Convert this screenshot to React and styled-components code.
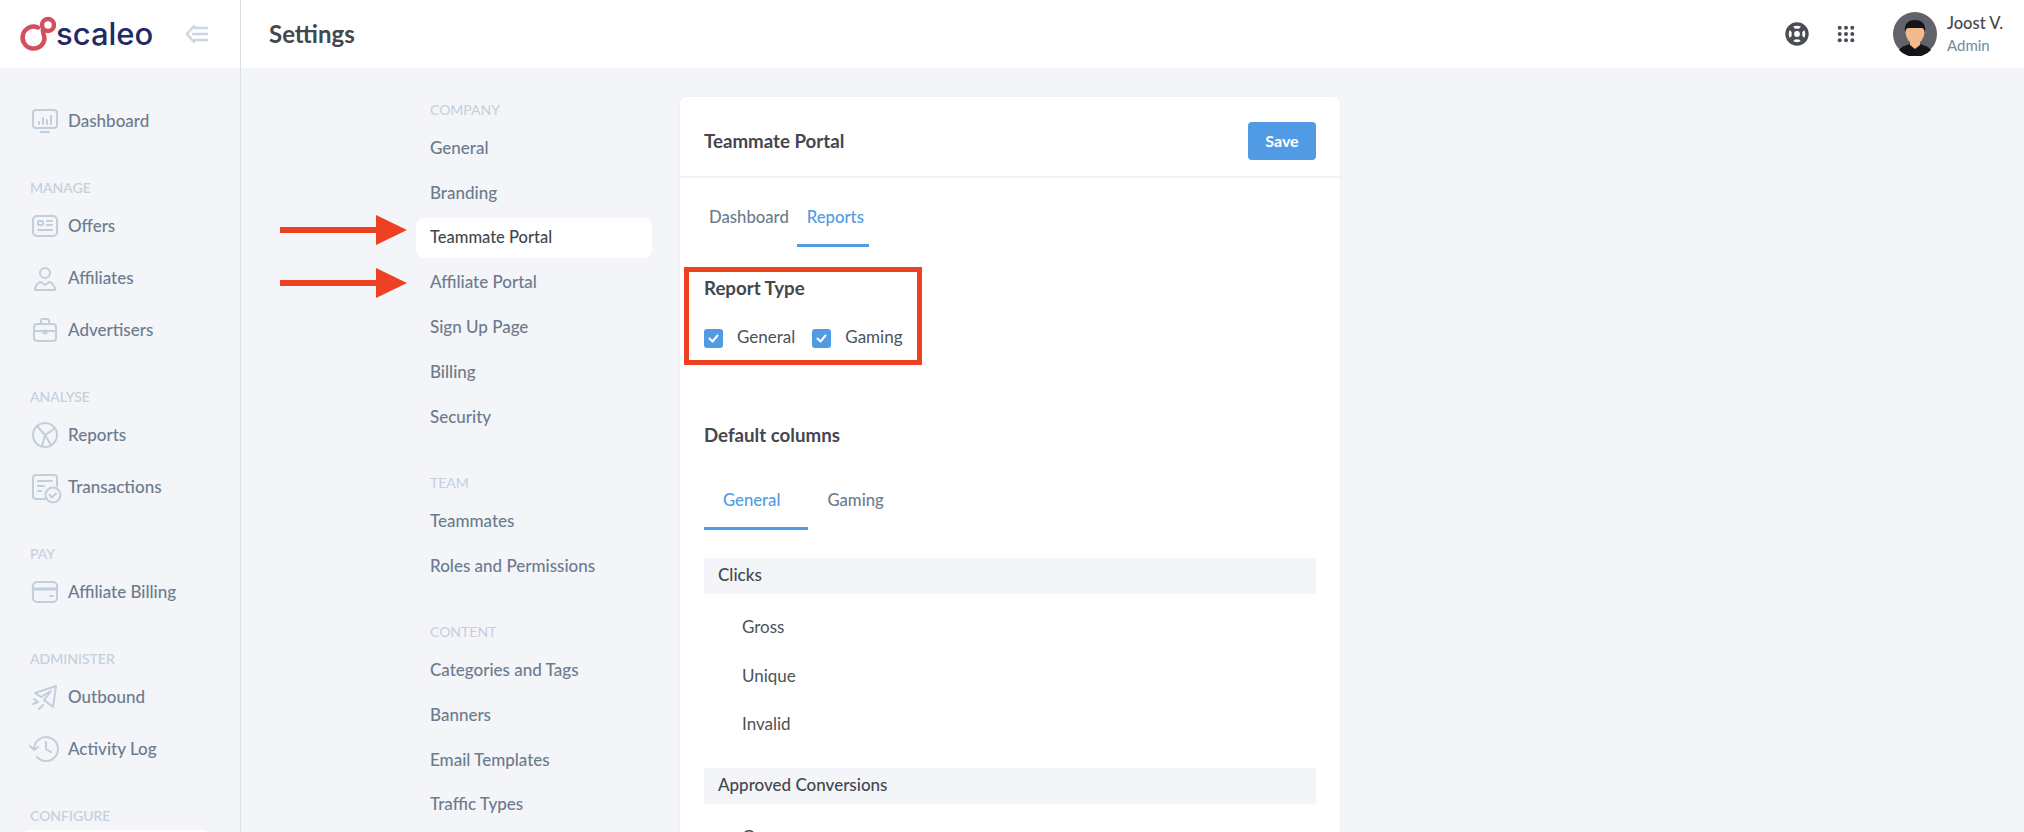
import styled, { createGlobalStyle } from "styled-components";

const GlobalStyle = createGlobalStyle`
    html, body {
        margin: 0;
        padding: 0;
        height: 100%;
        background: #f3f5f9;
        font-family: "Lato", "Open Sans", sans-serif;
        overflow: hidden;
    }
    * { box-sizing: border-box; }
`;

const Page = styled.div`
    position: relative;
    display: flex;
    width: 2024px;
    height: 832px;
    overflow: hidden;
    background: #f3f5f9;
`;

const Sidebar = styled.aside`
    flex: 0 0 241px;
    border-right: 1px solid #d8dfe9;
`;

const Brand = styled.div`
    display: flex;
    align-items: center;
    height: 68px;
    padding-left: 18px;
    background: #fff;
`;

const BrandName = styled.span`
    margin-left: 0;
    font-family: "Inter", sans-serif;
    font-size: 31px;
    font-weight: 500;
    color: #1f2a68;
    line-height: 68px;
`;

const Collapse = styled.svg`
    width: 24px;
    height: 20px;
    margin-left: 32px;
`;

const SideNav = styled.nav`
    padding-top: 27px;
`;

const SideLabel = styled.div`
    height: 20px;
    margin: 31px 0 2px 30px;
    font-size: 14px;
    font-weight: 500;
    line-height: 20px;
    color: #c5cfdb;
`;

const SideItem = styled.div`
    display: flex;
    align-items: center;
    gap: 10px;
    height: ${(props) => (props.$active ? "44px" : "52px")};
    margin: ${(props) => (props.$active ? "4px 31px 0 23px" : "0")};
    padding-left: ${(props) => (props.$active ? "9px" : "32px")};
    border-radius: 6px;
    background: ${(props) => (props.$active ? "#fff" : "transparent")};
    font-size: 17px;
    font-weight: 500;
    color: #6c7b8d;
`;

const SideText = styled.span`
    padding-bottom: 1px;
`;

const IconSlot = styled.svg`
    flex: 0 0 26px;
    width: 26px;
    height: 26px;
    fill: none;
    stroke: #c3cedb;
    stroke-width: 2;
    stroke-linecap: round;
    stroke-linejoin: round;
    overflow: visible;
`;

const Main = styled.div`
    flex: 1;
    min-width: 0;
`;

const TopBar = styled.header`
    display: flex;
    align-items: center;
    height: 68px;
    padding-left: 28px;
    background: #fff;
`;

const PageTitle = styled.h1`
    flex: 1;
    margin: 0;
    padding-bottom: 2px;
    font-size: 24px;
    font-weight: 700;
    color: #44474e;
`;

const TopIcon = styled.svg`
    width: 26px;
    height: 26px;
    margin-right: ${(props) => props.$gap}px;
`;

const User = styled.div`
    display: flex;
    align-items: center;
    width: 131px;
`;

const Avatar = styled.svg`
    flex: 0 0 44px;
    width: 44px;
    height: 44px;
    margin-right: 10px;
`;

const UserName = styled.div`
    font-size: 16.5px;
    font-weight: 500;
    line-height: 22px;
    color: #44474e;
`;

const UserRole = styled.div`
    font-size: 15px;
    line-height: 22px;
    color: #75879b;
`;

const Content = styled.div`
    display: flex;
    gap: 28px;
    padding: 29px 0 0 175px;
`;

const SettingsNav = styled.nav`
    flex: 0 0 236px;
    padding-top: 3px;
`;

const NavSection = styled.div`
    & + & {
        margin-top: 36.2px;
    }
`;

const NavLabel = styled.div`
    height: 20px;
    margin: 0 0 8px 14px;
    font-size: 14px;
    line-height: 20px;
    color: #c5cfdb;
`;

const NavItem = styled.div`
    display: flex;
    align-items: center;
    height: 40px;
    margin-bottom: 4.8px;
    padding: 0 0 1px 14px;
    border-radius: 8px;
    background: ${(props) => (props.$active ? "#fff" : "transparent")};
    font-size: ${(props) => (props.$active ? "16.5px" : "17px")};
    font-weight: 500;
    color: ${(props) => (props.$active ? "#44474e" : "#6c7b8d")};
`;

const Card = styled.section`
    flex: 0 0 660px;
    height: 760px;
    border-radius: 6px 6px 0 0;
    background: #fff;
    box-shadow: 0 0 2px rgba(120, 135, 160, 0.12);
`;

const CardHeader = styled.div`
    display: flex;
    align-items: center;
    justify-content: space-between;
    height: 81px;
    padding: 8px 24px 0;
    border-bottom: 2px solid #f0f2f6;
`;

const CardTitle = styled.h2`
    margin: 0;
    font-size: 18.7px;
    font-weight: 700;
    color: #44474e;
`;

const SaveButton = styled.button`
    width: 68px;
    height: 38px;
    border: 0;
    border-radius: 4px;
    background: #519be4;
    font-family: inherit;
    font-size: 16px;
    font-weight: 700;
    color: #fff;
`;

const CardBody = styled.div`
    padding: 0 24px;
`;

const TabBar = styled.div`
    display: flex;
    margin-top: ${(props) => props.$top}px;
`;

const Tab = styled.div`
    padding: 29px ${(props) => props.$right}px 17px ${(props) => props.$left}px;
    border-bottom: 3px solid ${(props) => (props.$active ? "#519be4" : "transparent")};
    font-size: 16.7px;
    line-height: 20px;
    font-weight: 500;
    color: ${(props) => (props.$active ? "#519be4" : "#6c7b8d")};
`;

const ReportSection = styled.div`
    position: relative;
    margin-top: 30px;
`;

const Highlight = styled.div`
    position: absolute;
    top: -10px;
    left: -20px;
    width: 238px;
    height: 98px;
    border: 5px solid #ee4124;
`;

const SectionTitle = styled.h3`
    margin: 0;
    padding-bottom: 2px;
    font-size: 18.7px;
    line-height: 22px;
    font-weight: 700;
    color: #44474e;
`;

const CheckRow = styled.div`
    display: flex;
    align-items: center;
    gap: 14px;
    margin-top: 27px;
    height: 20px;
`;

const CheckBox = styled.span`
    display: flex;
    align-items: center;
    justify-content: center;
    width: 19px;
    height: 19px;
    border-radius: 3px;
    background: #519be4;
    margin-left: ${(props) => props.$offset || 0}px;
`;

const CheckLabel = styled.span`
    padding-bottom: 3px;
    font-size: 17px;
    color: #4d5158;
`;

const ColumnsTitle = styled(SectionTitle)`
    margin-top: 76px;
`;

const GroupHead = styled.div`
    display: flex;
    align-items: center;
    height: 36px;
    margin-top: ${(props) => props.$top}px;
    padding: 0 0 3px 14px;
    background: #f3f5f9;
    font-size: 17px;
    font-weight: 500;
    color: #44474e;
`;

const ColumnList = styled.div`
    padding-top: 10px;
`;

const ColumnRow = styled.div`
    display: flex;
    align-items: center;
    height: 48.5px;
    padding: 0 0 3px 38px;
    font-size: 17px;
    color: #4d5158;
`;

const Arrow = styled.svg`
    position: absolute;
    left: 280px;
    top: ${(props) => props.$top}px;
    width: 128px;
    height: 30px;
`;

const DashboardIcon = () => (
    <IconSlot viewBox="0 0 26 26">
        <rect x="1" y="2" width="24" height="18" rx="3" />
        <path d="M9 24h8M7 14v2M11 10v6M15 12v4M19 8v8" />
    </IconSlot>
);
const OffersIcon = () => (
    <IconSlot viewBox="0 0 26 26">
        <rect x="1" y="3" width="24" height="20" rx="4" />
        <rect x="6" y="8" width="5" height="4" rx="1" />
        <path d="M15 8h5M15 12h5M6 17h14" />
    </IconSlot>
);
const AffiliatesIcon = () => (
    <IconSlot viewBox="0 0 26 26">
        <circle cx="13" cy="8" r="5" />
        <path d="M3 25c0-5 4-8 6-8l4 3 4-3c2 0 6 3 6 8z" />
    </IconSlot>
);
const AdvertisersIcon = () => (
    <IconSlot viewBox="0 0 26 26">
        <rect x="2" y="7" width="22" height="17" rx="3" />
        <path d="M9 7V4a2 2 0 0 1 2-2h4a2 2 0 0 1 2 2v3M2 14h22" />
        <circle cx="13" cy="15" r="1.5" />
    </IconSlot>
);
const ReportsIcon = () => (
    <IconSlot viewBox="0 0 26 26">
        <circle cx="13" cy="13" r="12" />
        <path d="M5 4l8 9 9-6M13 13l-3 11M13 13l6 10" />
    </IconSlot>
);
const TransactionsIcon = () => (
    <IconSlot viewBox="0 0 26 26">
        <path d="M13 25H4a3 3 0 0 1-3-3V4a3 3 0 0 1 3-3h18a3 3 0 0 1 3 3v8" />
        <path d="M6 7h14M6 12h6M6 17h3" />
        <circle cx="21" cy="21" r="7.5" />
        <path d="M17.5 21l2.5 2.5 4-4" />
    </IconSlot>
);
const BillingIcon = () => (
    <IconSlot viewBox="0 0 26 26">
        <rect x="1" y="3" width="24" height="20" rx="4" />
        <path d="M1 10h24" strokeWidth="3" />
        <path d="M18 17h3" />
    </IconSlot>
);
const OutboundIcon = () => (
    <IconSlot viewBox="0 0 26 26">
        <path d="M24 2L3 9l6 4 10-6-7 9 9 7z" />
        <path d="M2 15l4 3M1 20l5-2M7 25l4-4" />
    </IconSlot>
);
const ActivityIcon = () => (
    <IconSlot viewBox="0 0 26 26">
        <path d="M2 13a12 12 0 1 1 3 8" />
        <path d="M-2 10l4 4 4-3M14 6v7l5 3" />
    </IconSlot>
);

const sideSections = [
    {
        items: [["Dashboard", DashboardIcon]]
    },
    {
        label: "MANAGE",
        items: [["Offers", OffersIcon], ["Affiliates", AffiliatesIcon], ["Advertisers", AdvertisersIcon]]
    },
    {
        label: "ANALYSE",
        items: [["Reports", ReportsIcon], ["Transactions", TransactionsIcon]]
    },
    {
        label: "PAY",
        items: [["Affiliate Billing", BillingIcon]]
    },
    {
        label: "ADMINISTER",
        items: [["Outbound", OutboundIcon], ["Activity Log", ActivityIcon]]
    }
];

const settingsSections = [
    {
        label: "COMPANY",
        items: ["General", "Branding", "Teammate Portal", "Affiliate Portal", "Sign Up Page", "Billing", "Security"]
    },
    {
        label: "TEAM",
        items: ["Teammates", "Roles and Permissions"]
    },
    {
        label: "CONTENT",
        items: ["Categories and Tags", "Banners", "Email Templates", "Traffic Types"]
    }
];

const Tick = () => (
    <svg width="11" height="9" viewBox="0 0 11 9" fill="none" stroke="#fff" strokeWidth="2" strokeLinecap="round" strokeLinejoin="round">
        <path d="M1.5 4.5l3 3 5-6" />
    </svg>
);

const PointerArrow = ({ top }) => (
    <Arrow $top={top} viewBox="0 0 128 30">
        <path d="M0 12h96V0l31 15-31 15V18H0z" fill="#ee4124" />
    </Arrow>
);

export default function App() {
    return (
        <Page>
            <GlobalStyle />
            <Sidebar>
                <Brand>
                    <svg width="38" height="40" viewBox="0 0 38 40" fill="none" stroke="#d4505f" strokeWidth="4.5">
                        <path d="M20 13.5A11 11 0 1 0 26.5 25C26.5 20 24 19 25 15" strokeLinecap="round" />
                        <circle cx="30" cy="11" r="6" />
                    </svg>
                    <BrandName>scaleo</BrandName>
                    <Collapse viewBox="0 0 24 20" fill="none" stroke="#ccd6e2" strokeWidth="2.4" strokeLinecap="round">
                        <path d="M9 2L2 10l7 8M10 4h12M8 10h14M10 16h12" />
                    </Collapse>
                </Brand>
                <SideNav>
                    {sideSections.map((section, i) => (
                        <div key={i}>
                            {section.label && <SideLabel>{section.label}</SideLabel>}
                            {section.items.map(([name, Icon]) => (
                                <SideItem key={name}>
                                    <Icon />
                                    <SideText>{name}</SideText>
                                </SideItem>
                            ))}
                        </div>
                    ))}
                    <SideLabel>CONFIGURE</SideLabel>
                    <SideItem $active><SideText>Settings</SideText></SideItem>
                </SideNav>
            </Sidebar>
            <Main>
                <TopBar>
                    <PageTitle>Settings</PageTitle>
                    <TopIcon $gap={23} viewBox="0 0 26 26">
                        <circle cx="13" cy="13" r="10" fill="none" stroke="#4a4d55" strokeWidth="3.4" />
                        <circle cx="13" cy="13" r="4.2" fill="none" stroke="#4a4d55" strokeWidth="2.6" />
                        <path d="M6 6l4 4M20 6l-4 4M6 20l4-4M20 20l-4-4" stroke="#4a4d55" strokeWidth="4.6" />
                    </TopIcon>
                    <TopIcon $gap={34} viewBox="0 0 26 26">
                        {[6.7, 13, 19.3].map((y) =>
                            [6.7, 13, 19.3].map((x) => (
                                <circle key={`${x}-${y}`} cx={x} cy={y} r="2" fill="#4a4d55" />
                            ))
                        )}
                    </TopIcon>
                    <User>
                        <Avatar viewBox="0 0 44 44">
                            <circle cx="22" cy="22" r="22" fill="#62626a" />
                            <path d="M6 38c3-4 8-5 11-6l5 2 5-2c3 1 8 2 11 6a22 22 0 0 1-32 0z" fill="#17131a" />
                            <path d="M17 28h10v5l-5 4-5-4z" fill="#f2b98c" />
                            <ellipse cx="22" cy="20" rx="9.5" ry="11.5" fill="#f2b98c" />
                            <path d="M12 20c-1-8 3-12 10-12s11 4 10 12c-1-3-2-4-3-4H15c-1 0-2 1-3 4z" fill="#17131a" />
                        </Avatar>
                        <div>
                            <UserName>Joost V.</UserName>
                            <UserRole>Admin</UserRole>
                        </div>
                    </User>
                </TopBar>
                <Content>
                    <SettingsNav>
                        {settingsSections.map((section) => (
                            <NavSection key={section.label}>
                                <NavLabel>{section.label}</NavLabel>
                                {section.items.map((item) => (
                                    <NavItem key={item} $active={item === "Teammate Portal"}>{item}</NavItem>
                                ))}
                            </NavSection>
                        ))}
                    </SettingsNav>
                    <Card>
                        <CardHeader>
                            <CardTitle>Teammate Portal</CardTitle>
                            <SaveButton>Save</SaveButton>
                        </CardHeader>
                        <CardBody>
                            <TabBar $top={0}>
                                <Tab $left={5} $right={8}>Dashboard</Tab>
                                <Tab $left={10} $right={5} $active>Reports</Tab>
                            </TabBar>
                            <ReportSection>
                                <Highlight />
                                <SectionTitle>Report Type</SectionTitle>
                                <CheckRow>
                                    <CheckBox><Tick /></CheckBox>
                                    <CheckLabel>General</CheckLabel>
                                    <CheckBox $offset={3}><Tick /></CheckBox>
                                    <CheckLabel>Gaming</CheckLabel>
                                </CheckRow>
                            </ReportSection>
                            <ColumnsTitle>Default columns</ColumnsTitle>
                            <TabBar $top={13}>
                                <Tab $left={19} $right={28} $active>General</Tab>
                                <Tab $left={19} $right={19}>Gaming</Tab>
                            </TabBar>
                            <GroupHead $top={28}>Clicks</GroupHead>
                            <ColumnList>
                                <ColumnRow>Gross</ColumnRow>
                                <ColumnRow>Unique</ColumnRow>
                                <ColumnRow>Invalid</ColumnRow>
                            </ColumnList>
                            <GroupHead $top={18}>Approved Conversions</GroupHead>
                            <ColumnList>
                                <ColumnRow>Gross</ColumnRow>
                            </ColumnList>
                        </CardBody>
                    </Card>
                </Content>
            </Main>
            <PointerArrow top={215} />
            <PointerArrow top={268} />
        </Page>
    );
}
